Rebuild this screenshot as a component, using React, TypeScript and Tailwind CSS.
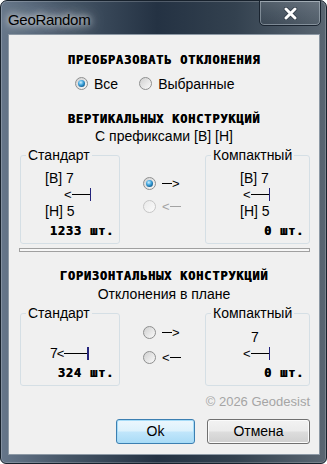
import React from 'react'

const sans = "font-['Liberation_Sans',Arial,sans-serif]"
const mono =
  "font-['DejaVu_Sans_Mono',monospace] font-bold text-[12px] leading-[12px] tracking-[0.8px] [text-shadow:0.5px_0_0_#000]"

function Radio({
  checked = false,
  disabled = false,
  className = '',
}: {
  checked?: boolean
  disabled?: boolean
  className?: string
}) {
  return (
    <div
      className={`w-[13px] h-[13px] shrink-0 rounded-full border flex items-center justify-center ${
        disabled
          ? 'border-[#c6c6c6] bg-[linear-gradient(135deg,#e9e9e9,#fbfbfb)]'
          : 'border-[#8e8f8f] bg-[linear-gradient(135deg,#d0d0d0,#fafafa)]'
      } ${className}`}
    >
      {checked && (
        <div className="w-[7px] h-[7px] rounded-full bg-[radial-gradient(circle_at_40%_35%,#d0f1ff_0%,#42a6de_40%,#105f94_75%,#0a3d63_100%)]" />
      )}
    </div>
  )
}

// "<——|"
function BackBar({ long = false }: { long?: boolean }) {
  return (
    <div className="flex items-center h-[13px]">
      <span className="text-[13px] leading-none">&lt;</span>
      <div className={`h-px bg-black ${long ? 'w-[23px]' : 'w-[18px]'}`} />
      <div className="w-[1.5px] h-[13px] bg-[#24247c]" />
    </div>
  )
}

function Forward() {
  return (
    <div className="flex items-center h-[13px]">
      <div className="w-[10px] h-px bg-black" />
      <span className="text-[13px] leading-none">&gt;</span>
    </div>
  )
}

function Back({ disabled = false }: { disabled?: boolean }) {
  return (
    <div className={`flex items-center h-[13px] ${disabled ? 'text-[#a3a3a3]' : 'text-black'}`}>
      <span className="text-[13px] leading-none">&lt;</span>
      <div className={`w-[11px] h-px ${disabled ? 'bg-[#a3a3a3]' : 'bg-black'}`} />
    </div>
  )
}

function Group({
  title,
  className,
  children,
}: {
  title: string
  className: string
  children: React.ReactNode
}) {
  return (
    <fieldset className={`shrink-0 m-0 p-0 min-w-0 rounded-[3px] border border-[#d5dfe5] ${className}`}>
      <legend className="ml-[5px] px-[2px] text-[14px] leading-[16px]">{title}</legend>
      {children}
    </fieldset>
  )
}

export default function App() {
  return (
    <div
      className={`w-[327px] h-[464px] flex flex-col overflow-hidden rounded-t-[7px] rounded-b-[6px] border border-[#17212c] bg-[linear-gradient(90deg,#66768a_0%,#465667_20%,#243243_48%,#33414f_72%,#5a6672_100%)] shadow-[inset_0_0_0_1px_rgba(255,255,255,0.2)] ${sans}`}
    >
      {/* Title bar */}
      <div className="h-[33px] shrink-0 flex items-start justify-between pl-[7px] pr-[5px]">
        <div className="mt-[11px] text-[15px] leading-[16px] tracking-[-0.3px] text-black [text-shadow:0_0_6px_rgba(255,255,255,0.9),0_0_12px_rgba(255,255,255,0.7),0_0_20px_rgba(255,255,255,0.5)]">
          GeoRandom
        </div>
        <div className="-mt-px w-[62px] h-[26px] rounded-b-[5px] border border-[#1a2430] shadow-[inset_0_0_0_1px_rgba(200,210,220,0.45)] bg-[linear-gradient(180deg,rgba(255,255,255,0.1),rgba(255,255,255,0.03)_50%,rgba(0,0,0,0.05))] flex items-center justify-center">
          <svg width="15" height="13" viewBox="0 0 15 13">
            <path d="M3 2 L12 11 M12 2 L3 11" stroke="#2a3440" strokeWidth="4.4" strokeLinecap="round" />
            <path d="M3 2 L12 11 M12 2 L3 11" stroke="#ffffff" strokeWidth="3" strokeLinecap="round" />
          </svg>
        </div>
      </div>

      {/* Client area */}
      <div className="flex-1 ml-[7px] mr-[6px] mb-[8px] border border-[#8d99a5] bg-[#f0f0f0] flex flex-col text-black">
        <div className={`${mono} mt-[19px] text-center`}>ПРЕОБРАЗОВАТЬ ОТКЛОНЕНИЯ</div>

        <div className="mt-[11px] h-[13px] flex items-center pl-[66px] text-[14px] leading-[16px]">
          <Radio checked />
          <span className="ml-[6px]">Все</span>
          <Radio className="ml-[21px]" />
          <span className="ml-[6px]">Выбранные</span>
        </div>

        {/* Vertical */}
        <div className={`${mono} mt-[23px] text-center`}>ВЕРТИКАЛЬНЫХ КОНСТРУКЦИЙ</div>
        <div className="mt-[3px] text-center text-[14px] leading-[16px]">С префиксами [В] [Н]</div>

        <div className="mt-[3px] h-[97px] flex ml-[11px] mr-[9px]">
          <Group title="Стандарт" className="w-[100px] h-[97px]">
            <div className="pt-[7px] text-[14px] leading-[16px]">
              <div className="pl-[24px]">[В] 7</div>
              <div className="h-[17px] flex items-center pl-[43px]">
                <BackBar />
              </div>
              <div className="pl-[24px]">[Н] 5</div>
              <div className={`${mono} mt-[6px] text-right pr-[5px]`}>1233 шт.</div>
            </div>
          </Group>

          <div className="flex-1 pt-[30px] pl-[23px] flex flex-col gap-[10px]">
            <div className="flex items-center gap-[6px]">
              <Radio checked />
              <Forward />
            </div>
            <div className="flex items-center gap-[6px]">
              <Radio disabled />
              <Back disabled />
            </div>
          </div>

          <Group title="Компактный" className="w-[105px] h-[97px]">
            <div className="pt-[7px] text-[14px] leading-[16px]">
              <div className="pl-[34px]">[В] 7</div>
              <div className="h-[17px] flex items-center pl-[37px]">
                <BackBar />
              </div>
              <div className="pl-[34px]">[Н] 5</div>
              <div className={`${mono} mt-[6px] text-right pr-[5px]`}>0 шт.</div>
            </div>
          </Group>
        </div>

        <div className="mt-[4px] h-[4px] ml-[10px] mr-[9px] border border-[#a0a0a0] bg-[#f7f7f7]" />

        {/* Horizontal */}
        <div className={`${mono} mt-[18px] text-center`}>ГОРИЗОНТАЛЬНЫХ КОНСТРУКЦИЙ</div>
        <div className="mt-[4px] text-center text-[14px] leading-[16px]">Отклонения в плане</div>

        <div className="mt-[3px] h-[81px] flex ml-[11px] mr-[9px]">
          <Group title="Стандарт" className="w-[100px] h-[81px]">
            <div className="pt-[8px] text-[14px] leading-[16px]">
              <div className="h-[16px]" />
              <div className="h-[16px] flex items-center pl-[29px]">
                <span>7</span>
                <div className="-ml-px">
                  <BackBar long />
                </div>
              </div>
              <div className={`${mono} mt-[6px] text-right pr-[5px]`}>324 шт.</div>
            </div>
          </Group>

          <div className="flex-1 pt-[21px] pl-[23px] flex flex-col gap-[12px]">
            <div className="flex items-center gap-[6px]">
              <Radio />
              <Forward />
            </div>
            <div className="flex items-center gap-[6px]">
              <Radio />
              <Back />
            </div>
          </div>

          <Group title="Компактный" className="w-[105px] h-[81px]">
            <div className="pt-[8px] text-[14px] leading-[16px]">
              <div className="pl-[45px]">7</div>
              <div className="h-[16px] flex items-center pl-[37px]">
                <BackBar />
              </div>
              <div className={`${mono} mt-[6px] text-right pr-[5px]`}>0 шт.</div>
            </div>
          </Group>
        </div>

        <div className="mt-[8px] pr-[9px] text-right text-[13px] leading-[16px] text-[#a5a5a5]">
          © 2026 Geodesist
        </div>

        <div className="mt-[9px] flex justify-end gap-[12px] pr-[9px] text-[14px]">
          <button className="w-[79px] h-[25px] rounded-[3px] border border-[#3c7fb1] shadow-[inset_0_0_0_1px_#a6dcf8] bg-[linear-gradient(180deg,#ecf7fd_0%,#dcf1fc_48%,#c1e6fb_52%,#a9dbf6_100%)]">
            Ok
          </button>
          <button className="w-[103px] h-[25px] rounded-[3px] border border-[#707070] shadow-[inset_0_0_0_1px_#fbfbfb] bg-[linear-gradient(180deg,#f2f2f2_0%,#ebebeb_48%,#dddddd_52%,#cfcfcf_100%)]">
            Отмена
          </button>
        </div>
      </div>
    </div>
  )
}
